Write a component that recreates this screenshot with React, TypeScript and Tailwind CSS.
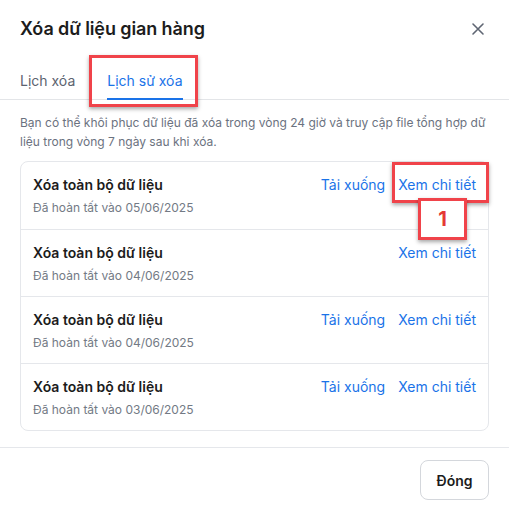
import React from "react";

const rows = [
  { date: "05/06/2025", download: true },
  { date: "04/06/2025", download: false },
  { date: "04/06/2025", download: true },
  { date: "03/06/2025", download: true },
];

export default function App() {
  return (
    <div
      className="relative w-[509px] h-[506px] bg-white text-[#1f1f1f] overflow-hidden"
      style={{ fontFamily: "Inter, 'Noto Sans', sans-serif" }}
    >
      {/* Header */}
      <div className="flex items-center justify-between h-[57px] pl-5 pr-[24px]">
        <h1 className="text-[18px] font-semibold leading-none tracking-[-0.1px] text-[#1c1c1c]">
          Xóa dữ liệu gian hàng
        </h1>
        <svg width="14" height="14" viewBox="0 0 14 14" className="text-[#5f6673]">
          <path d="M2 2 L12 12 M12 2 L2 12" stroke="currentColor" strokeWidth="1.6" strokeLinecap="round" />
        </svg>
      </div>

      {/* Tabs */}
      <div className="flex gap-8 px-5 border-b border-[#e3e5e8] h-[43px]">
        <div className="flex items-end text-[14px] leading-[20px] text-[#5c6370] pb-[8px]">Lịch xóa</div>
        <div className="relative flex items-end text-[14px] leading-[20px] text-[#1a73e8] pb-[8px]">
          Lịch sử xóa
          <div className="absolute left-0 right-0 bottom-[-1px] h-[2px] bg-[#1a73e8]" />
        </div>
      </div>

      {/* Description */}
      <p className="px-5 pt-[13px] text-[12px] leading-[19px] text-[#6b7280]">
        Bạn có thể khôi phục dữ liệu đã xóa trong vòng 24 giờ và truy cập file tổng hợp dữ
        liệu trong vòng 7 ngày sau khi xóa.
      </p>

      {/* Card */}
      <div className="mx-5 mt-[10px] border border-[#e5e7eb] rounded-lg">
        {rows.map((r, i) => (
          <div
            key={i}
            className={`flex justify-between h-[67px] pl-3 pr-3 pt-[13px] ${i > 0 ? "border-t border-[#e5e7eb]" : ""}`}
          >
            <div className="flex flex-col">
              <span className="text-[14px] leading-[20px] font-semibold text-[#1c1c1c]">
                Xóa toàn bộ dữ liệu
              </span>
              <span className="text-[12px] leading-[20px] mt-[3px] text-[#737a85]">
                Đã hoàn tất vào {r.date}
              </span>
            </div>
            <div className="flex gap-[13px] text-[14px] leading-[20px] text-[#1a73e8]">
              {r.download && <span>Tải xuống</span>}
              <span>Xem chi tiết</span>
            </div>
          </div>
        ))}
      </div>

      {/* Footer */}
      <div className="mt-[16px] border-t border-[#e5e7eb] flex justify-end px-5 pt-[12px]">
        <button className="h-[40px] w-[69px] rounded-lg border border-[#d4d7dc] text-[14px] font-semibold text-[#1c1c1c] bg-white">
          Đóng
        </button>
      </div>

      {/* Annotations */}
      <div className="absolute left-[89px] top-[55px] w-[109px] h-[52px] border-[3px] border-[#f0434a] shadow-[0_2px_4px_rgba(0,0,0,0.35)]" />
      <div className="absolute left-[392px] top-[162px] w-[97px] h-[41px] border-[3px] border-[#f0434a] shadow-[0_2px_4px_rgba(0,0,0,0.35)]" />
      <div className="absolute left-[418px] top-[198px] w-[49px] h-[42px] bg-white border-[3px] border-[#f0434a] shadow-[0_2px_4px_rgba(0,0,0,0.35)] flex items-center justify-center text-[20px] font-bold text-[#e53935]">
        1
      </div>
    </div>
  );
}
